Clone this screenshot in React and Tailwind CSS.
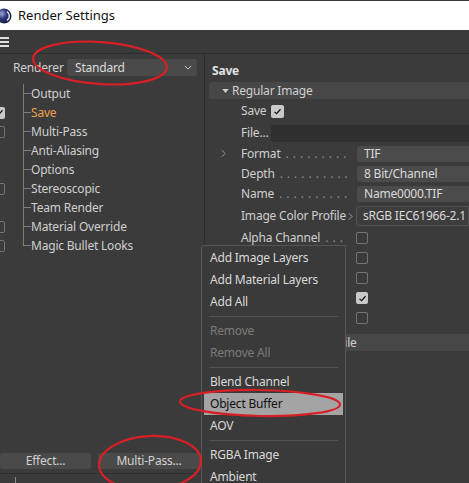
import React from "react";

const Check = ({ checked, size = "w-[12px] h-[12px]", className = "" }) => (
  <span
    className={`${size} shrink-0 rounded-[2px] flex items-center justify-center ${
      checked ? "bg-[#c9c9c9]" : "border border-[#747474]"
    } ${className}`}
  >
    {checked && (
      <svg viewBox="0 0 12 12" className="w-[9px] h-[9px]">
        <path d="M2 6.5 L4.8 9 L10 3" fill="none" stroke="#111" strokeWidth="1.6" />
      </svg>
    )}
  </span>
);

const Chevron = () => (
  <svg viewBox="0 0 6 10" className="w-[5px] h-[9px]">
    <path d="M1 1 L5 5 L1 9" fill="none" stroke="#9a9a9a" strokeWidth="1.2" />
  </svg>
);

// dotted leader between a label and its field
const Dots = () => (
  <span className="flex-1 overflow-hidden whitespace-nowrap text-[#8c8c8c] pl-[5px] tracking-[4px]">
    ..............
  </span>
);

const treeItems = [
  { label: "Output" },
  { label: "Save", active: true, check: true },
  { label: "Multi-Pass", check: false },
  { label: "Anti-Aliasing" },
  { label: "Options" },
  { label: "Stereoscopic", check: false },
  { label: "Team Render" },
  { label: "Material Override", check: false },
  { label: "Magic Bullet Looks", check: false },
];

const menuGroups = [
  [{ label: "Add Image Layers" }, { label: "Add Material Layers" }, { label: "Add All" }],
  [
    { label: "Remove", disabled: true },
    { label: "Remove All", disabled: true },
  ],
  [{ label: "Blend Channel" }, { label: "Object Buffer", hot: true }, { label: "AOV" }],
  [{ label: "RGBA Image" }, { label: "Ambient" }, { label: "Diffuse" }],
];

const FieldRow = ({ label, value, arrow, h = "h-[20px]" }) => (
  <div className={`flex items-center ${h}`}>
    <div className="w-[36px] pl-[16px] flex items-center">{arrow && <Chevron />}</div>
    <div className="w-[116px] flex items-center pr-[10px]">
      <span>{label}</span>
      <Dots />
    </div>
    <div className="flex-1 h-[16px] bg-[#4b4b4b] rounded-l-[3px] pl-[7px] flex items-center text-[#dadada]">
      {value}
    </div>
  </div>
);

const CheckRow = ({ label, checked }) => (
  <div className="flex items-center h-[20px]">
    <div className="w-[36px]" />
    <div className="w-[115px] flex items-center pr-[10px]">
      <span className="whitespace-nowrap">{label}</span>
      <Dots />
    </div>
    <Check checked={checked} />
  </div>
);

export default function App() {
  return (
    <div className="relative w-[469px] h-[483px] overflow-hidden flex flex-col bg-[#3b3b3b] text-[12px] leading-none tracking-[-0.2px] text-[#cfcfcf] font-['Noto_Sans',sans-serif]">
      {/* title bar */}
      <div className="h-[30px] shrink-0 bg-white border-t border-[#3a3a3a] flex items-center">
        <svg viewBox="0 0 16 16" className="w-[16px] h-[16px] -ml-[4px]">
          <defs>
            <radialGradient id="lg" cx="0.35" cy="0.35" r="0.7">
              <stop offset="0" stopColor="#9aa6d8" />
              <stop offset="0.5" stopColor="#2b3478" />
              <stop offset="1" stopColor="#141a3c" />
            </radialGradient>
          </defs>
          <circle cx="8" cy="8" r="7.5" fill="url(#lg)" />
          <path d="M11 3.5 A5.5 5.5 0 0 1 11 12.5" fill="none" stroke="#e8ecf8" strokeWidth="1.4" />
        </svg>
        <span className="ml-[6px] text-[13px] tracking-normal text-[#111]">Render Settings</span>
      </div>

      {/* menu bar */}
      <div className="h-[24px] shrink-0 bg-[#3a3a3a] border-b border-[#2e2e2e] flex items-center">
        <div className="w-[9px] flex flex-col gap-[2px]">
          <span className="h-[2px] bg-[#dedede]" />
          <span className="h-[2px] bg-[#dedede]" />
          <span className="h-[2px] bg-[#dedede]" />
        </div>
      </div>

      <div className="flex flex-1 min-h-0">
        {/* left panel */}
        <div className="w-[205px] shrink-0 border-r border-[#2d2d2d] flex flex-col pt-[5px]">
          <div className="flex items-center h-[17px] pl-[13px]">
            <span className="w-[54px]">Renderer</span>
            <div className="w-[130px] h-[17px] bg-[#4a4a4a] rounded-[3px] flex items-center justify-between pl-[8px] pr-[5px] text-[#dcdcdc]">
              <span>Standard</span>
              <svg viewBox="0 0 10 6" className="w-[8px] h-[5px]">
                <path d="M1 1 L5 5 L9 1" fill="none" stroke="#cfcfcf" strokeWidth="1.2" />
              </svg>
            </div>
          </div>

          <div className="mt-[8px] flex flex-col">
            {treeItems.map((item, i) => (
              <div key={item.label} className="flex items-center h-[19px]">
                <div className="w-[23px] flex items-center">
                  {item.check !== undefined && <Check checked={item.check} className="-ml-[7px]" />}
                </div>
                <span
                  className={`w-px bg-[#7c7c7c] ${
                    i === treeItems.length - 1 ? "self-start h-[10px]" : "self-stretch"
                  }`}
                />
                <span className="w-[7px] h-px bg-[#7c7c7c]" />
                <span className={item.active ? "text-[#f0a050]" : ""}>{item.label}</span>
              </div>
            ))}
          </div>

          <div className="flex-1" />

          <div className="flex gap-[7px] h-[16px]">
            <button className="w-[91px] bg-[#4a4a4a] rounded-[3px] text-[#d2d2d2]">Effect...</button>
            <button className="w-[102px] bg-[#4a4a4a] rounded-[3px] text-[#d2d2d2]">Multi-Pass...</button>
          </div>
          <div className="mt-[4px] h-[10px] border-t border-[#2e2e2e] pl-[15px]">
            <span className="block w-px h-[7px] mt-[3px] bg-[#8a8a8a]" />
          </div>
        </div>

        {/* right panel */}
        <div className="flex-1 flex flex-col pt-[8px]">
          <div className="h-[17px] pl-[7px] flex items-center font-bold text-[#e2e2e2]">Save</div>
          <div className="mt-[3px] ml-[4px] h-[17px] bg-[#474747] rounded-l-[3px] flex items-center pl-[13px]">
            <svg viewBox="0 0 8 5" className="w-[7px] h-[4px] mr-[3px]">
              <path d="M0 0 L8 0 L4 5 Z" fill="#d0d0d0" />
            </svg>
            <span>Regular Image</span>
          </div>

          <div className="flex items-center h-[24px]">
            <div className="w-[36px]" />
            <span className="w-[30px]">Save</span>
            <Check checked size="w-[13px] h-[13px]" />
          </div>
          <div className="flex items-center h-[20px]">
            <div className="w-[36px]" />
            <span className="w-[30px]">File...</span>
            <div className="flex-1 h-[17px] bg-[#2f2f2f] rounded-l-[3px]" />
          </div>
          <FieldRow label="Format" value="TIF" arrow h="h-[21px]" />
          <FieldRow label="Depth" value="8 Bit/Channel" />
          <FieldRow label="Name" value="Name0000.TIF" />
          <div className="flex items-center h-[24px]">
            <div className="w-[36px]" />
            <div className="w-[115px] flex items-center justify-between pr-[3px]">
              <span className="whitespace-nowrap">Image Color Profile</span>
              <Chevron />
            </div>
            <div className="flex-1 h-[20px] bg-[#3d3d3d] border border-[#525252] rounded-l-[3px] pl-[6px] flex items-center text-[#dadada]">
              sRGB IEC61966-2.1
            </div>
          </div>
          <CheckRow label="Alpha Channel" />
          <CheckRow label="Straight Alpha" />
          <CheckRow label="Separate Alpha" />
          <CheckRow label="8 Bit Dithering" checked />
          <CheckRow label="Include Sound" />

          <div className="mt-[6px] ml-[4px] h-[17px] bg-[#474747] rounded-l-[3px] flex items-center pl-[8px]">
            <svg viewBox="0 0 5 8" className="w-[4px] h-[7px] mr-[4px]">
              <path d="M0 0 L5 4 L0 8 Z" fill="#d0d0d0" />
            </svg>
            <span>Compositing Project File</span>
          </div>
        </div>
      </div>

      {/* popup menu */}
      <div className="absolute left-[201px] top-[245px] w-[145px] h-[260px] bg-[#3a3a3a] border border-[#555] rounded-tl-[3px] pt-[1px] px-[2px] text-[#d9d9d9]">
        {menuGroups.map((group, gi) => (
          <div key={gi}>
            {gi > 0 && (
              <div className="h-[7px] flex items-center px-[5px]">
                <span className="flex-1 h-px bg-[#545454]" />
              </div>
            )}
            {group.map((it) => (
              <div
                key={it.label}
                className={`h-[22px] flex items-center pl-[6px] ${
                  it.hot ? "bg-[#a4a4a4] text-[#111]" : it.disabled ? "text-[#7b7b7b]" : ""
                }`}
              >
                {it.label}
              </div>
            ))}
          </div>
        ))}
      </div>

      {/* red annotation marks */}
      <svg className="absolute inset-0 pointer-events-none" width="469" height="483" viewBox="0 0 469 483">
        <g fill="none" stroke="#d91f26" strokeWidth="2.2">
          <ellipse cx="100" cy="63" rx="67" ry="21" transform="rotate(4 100 63)" />
          <ellipse cx="260" cy="403" rx="80" ry="13" transform="rotate(1 260 403)" />
          <ellipse cx="150" cy="463" rx="51" ry="27" transform="rotate(-3 150 463)" />
        </g>
      </svg>
    </div>
  );
}
